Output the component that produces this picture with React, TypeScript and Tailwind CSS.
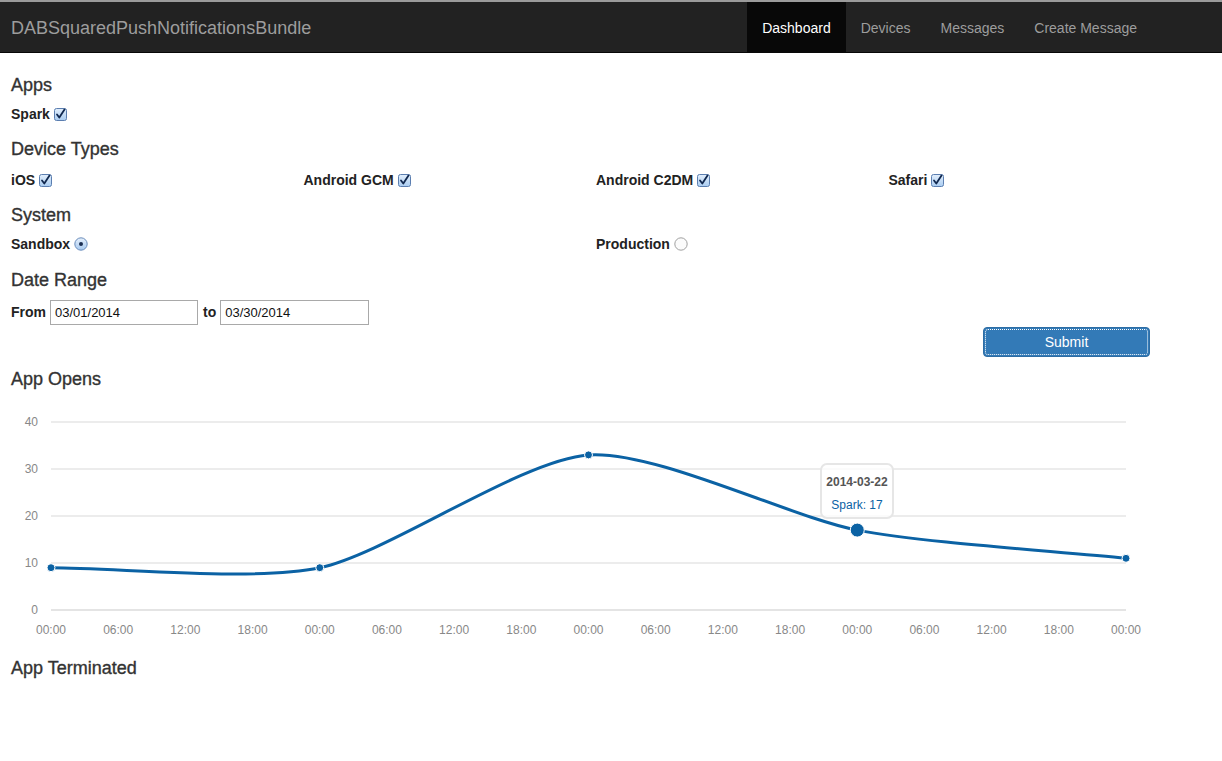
import React from 'react';

type Point = { x: number; y: number };

const FONT = { fontFamily: '"Liberation Sans", Arial, Helvetica, sans-serif' };

const values = [9, 9, 33, 17, 11];
const xLabels = ['00:00', '06:00', '12:00', '18:00'];

const LEFT = 51;
const RIGHT = 1126;
const BASE = 217;
const PER_UNIT = 4.7;

function toPoints(data: number[]): Point[] {
  const step = (RIGHT - LEFT) / (data.length - 1);
  return data.map((v, i) => ({ x: LEFT + i * step, y: BASE - v * PER_UNIT }));
}

// smooth path, same idea as the morris.js line
function smoothPath(pts: Point[]) {
  const grads = pts.map((p, i) => {
    if (i === 0) return (pts[1].y - p.y) / (pts[1].x - p.x);
    if (i === pts.length - 1) return (p.y - pts[i - 1].y) / (p.x - pts[i - 1].x);
    return (pts[i + 1].y - pts[i - 1].y) / (pts[i + 1].x - pts[i - 1].x);
  });
  let d = `M${pts[0].x},${pts[0].y}`;
  for (let i = 1; i < pts.length; i++) {
    const prev = pts[i - 1];
    const cur = pts[i];
    const ix = (cur.x - prev.x) / 4;
    d += ` C${prev.x + ix},${prev.y + ix * grads[i - 1]} ${cur.x - ix},${cur.y - ix * grads[i]} ${cur.x},${cur.y}`;
  }
  return d;
}

function CheckBox() {
  return (
    <svg width="13" height="13" viewBox="0 0 13 13" className="ml-[4px] inline-block">
      <defs>
        <linearGradient id="cbg" x1="0" y1="0" x2="0" y2="1">
          <stop offset="0" stopColor="#e3effc" />
          <stop offset="1" stopColor="#a9ccf1" />
        </linearGradient>
      </defs>
      <rect x="0.5" y="0.5" width="12" height="12" rx="2" fill="url(#cbg)" stroke="#5b7eb0" />
      <path d="M3 6.5 L5.3 9.5 L10.5 1.5" fill="none" stroke="#10284f" strokeWidth="1.8" strokeLinecap="round" strokeLinejoin="round" />
    </svg>
  );
}

function Radio({ checked }: { checked?: boolean }) {
  return (
    <svg width="14" height="14" viewBox="0 0 14 14" className="ml-[4px] inline-block">
      <defs>
        <linearGradient id="rdg" x1="0" y1="0" x2="0" y2="1">
          <stop offset="0" stopColor="#e6f0fc" />
          <stop offset="1" stopColor="#a6c9ef" />
        </linearGradient>
      </defs>
      <circle cx="7" cy="7" r="6.2" fill={checked ? 'url(#rdg)' : '#fbfbfb'} stroke={checked ? '#6a8cbb' : '#a0a0a0'} />
      {checked && <circle cx="7" cy="7" r="2" fill="#1b2f52" />}
    </svg>
  );
}

function Label({ text, children }: { text: string; children?: React.ReactNode }) {
  return (
    <div className="flex items-center text-[14px] font-bold text-[#222]">
      <span>{text}</span>
      {children}
    </div>
  );
}

function Heading({ text, className }: { text: string; className?: string }) {
  return (
    <h3 className={`h-[28px] text-[18px] leading-[28px] font-medium text-[#333] [-webkit-text-stroke:0.35px_#333] ${className ?? ''}`}>
      {text}
    </h3>
  );
}

function Chart() {
  const pts = toPoints(values);
  const grid = [40, 30, 20, 10, 0];
  const ticks = Array.from({ length: 17 }, (_, i) => ({
    x: LEFT + (i * (RIGHT - LEFT)) / 16,
    label: xLabels[i % 4],
  }));
  return (
    <div className="relative h-[253px] w-[1222px]">
      <svg width="1222" height="253" viewBox="0 0 1222 253" className="block" style={FONT}>
        {grid.map((g) => {
          const y = BASE - g * PER_UNIT;
          return (
            <g key={g}>
              <line x1={LEFT} x2={RIGHT} y1={y} y2={y} stroke={g === 0 ? '#e4e4e4' : '#d9d9d9'} strokeWidth={g === 0 ? 2 : 1} />
              <text x="38" y={y + 4} textAnchor="end" fontSize="12" fill="#888">
                {g}
              </text>
            </g>
          );
        })}
        {ticks.map((t, i) => (
          <text key={i} x={t.x} y="241" textAnchor="middle" fontSize="12" fill="#888">
            {t.label}
          </text>
        ))}
        <path d={smoothPath(pts)} fill="none" stroke="#0b62a4" strokeWidth="3" />
        {pts.map((p, i) => (
          <circle key={i} cx={p.x} cy={p.y} r={i === 3 ? 7 : 4} fill="#0b62a4" stroke="#fff" strokeWidth="1" />
        ))}
      </svg>
      <div className="absolute left-[820px] top-[70px] flex h-[56px] w-[74px] flex-col items-center rounded-[7px] border-2 border-[#e6e6e6] bg-white/80 text-[12px]">
        <div className="mt-[8px] font-bold text-[#555]">2014-03-22</div>
        <div className="mt-[5px] text-[#0b62a4]">Spark: 17</div>
      </div>
    </div>
  );
}

export default function App() {
  return (
    <div className="min-h-[761px] bg-white text-[#333]" style={FONT}>
      <nav className="flex h-[53px] items-stretch border-t-2 border-b border-t-[#9b9b9b] border-b-[#080808] bg-[#222]">
        <div className="flex items-center pl-[11px] pt-[3px] text-[18px] text-[#9d9d9d]">DABSquaredPushNotificationsBundle</div>
        <ul className="ml-auto mr-[70px] flex items-stretch text-[14px]">
          <li className="flex items-center bg-[#080808] px-[15px] pt-[3px] text-white">Dashboard</li>
          <li className="flex items-center px-[15px] pt-[3px] text-[#9d9d9d]">Devices</li>
          <li className="flex items-center px-[15px] pt-[3px] text-[#9d9d9d]">Messages</li>
          <li className="flex items-center px-[15px] pt-[3px] text-[#9d9d9d]">Create Message</li>
        </ul>
      </nav>

      <div className="pl-[11px]">
        <Heading text="Apps" className="mt-[18px]" />
        <div className="flex h-[30px] items-center">
          <Label text="Spark">
            <CheckBox />
          </Label>
        </div>

        <Heading text="Device Types" className="mt-[6px]" />
        <div className="mt-[2px] grid h-[30px] w-[1170px] grid-cols-4 items-center">
          <Label text="iOS">
            <CheckBox />
          </Label>
          <Label text="Android GCM">
            <CheckBox />
          </Label>
          <Label text="Android C2DM">
            <CheckBox />
          </Label>
          <Label text="Safari">
            <CheckBox />
          </Label>
        </div>

        <Heading text="System" className="mt-[6px]" />
        <div className="grid h-[30px] w-[1170px] grid-cols-2 items-center">
          <Label text="Sandbox">
            <Radio checked />
          </Label>
          <Label text="Production">
            <Radio />
          </Label>
        </div>

        <Heading text="Date Range" className="mt-[7px]" />
        <div className="mt-[3px] flex h-[30px] items-center text-[14px]">
          <span className="font-bold text-[#222]">From</span>
          <input
            readOnly
            value="03/01/2014"
            className="ml-[4px] h-[25px] w-[148px] border border-[#a9a9a9] px-[4px] text-[13px] text-[#111] outline-none"
          />
          <span className="ml-[5px] font-bold text-[#222]">to</span>
          <input
            readOnly
            value="03/30/2014"
            className="ml-[4px] h-[25px] w-[149px] border border-[#a9a9a9] px-[4px] text-[13px] text-[#111] outline-none"
          />
        </div>

        <div className="flex h-[30px] w-[1139px] justify-end">
          <button className="h-[30px] w-[167px] rounded-[4px] border border-[#2e6da4] bg-[#337ab7] p-[1px] text-[14px] text-white">
            <span className="flex h-full w-full items-center justify-center rounded-[3px] border border-dotted border-white">
              Submit
            </span>
          </button>
        </div>

        <Heading text="App Opens" className="mt-[8px]" />
      </div>

      <Chart />

      <div className="pl-[11px]">
        <Heading text="App Terminated" className="mt-[8px]" />
      </div>
    </div>
  );
}
